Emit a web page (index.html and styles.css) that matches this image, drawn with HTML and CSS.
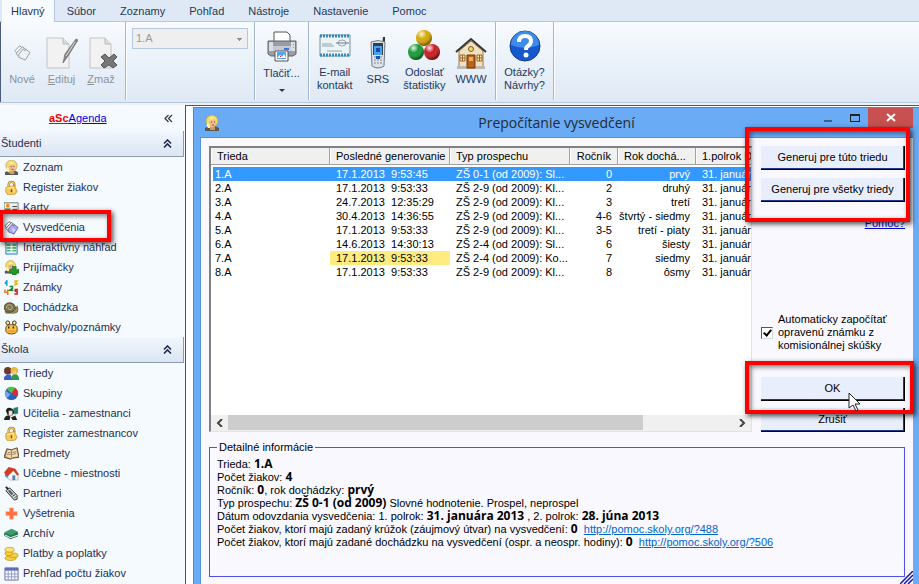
FILE: index.html
```html
<!DOCTYPE html>
<html lang="sk">
<head>
    <meta charset="UTF-8">
    <meta name="viewport" content="width=device-width, initial-scale=1.0">
    <title>aScAgenda - Prepočítanie vysvedčení</title>
    <link rel="stylesheet" href="styles.css">
</head>
<body>
    <!-- Shared icons -->
    <svg class="sprite" aria-hidden="true">
        <symbol id="pupil" viewBox="0 0 16 16">
            <path d="M1 16v-3l4-2h6l4 2v3z" fill="#555a50"/>
            <path d="M6 11h5v4H6z" fill="#d59a68"/>
            <ellipse cx="8" cy="6" rx="6" ry="6" fill="#f3dc6c" stroke="#b59a42" stroke-width=".7"/>
            <path d="M3 8q-1 3 1 5h2V9zM6 3q3-2 5 1-3-1-4 1z" fill="#fff4a5"/>
            <path d="M5 6q3 0 5-2 2 1 2 4t-3 4-4-3z" fill="#f1bd8b"/>
            <path d="M7 7h1M10 7h1" stroke="#36486a"/>
            <path d="M8 10h2" stroke="#a83f32"/>
        </symbol>
        <symbol id="lock" viewBox="0 0 16 16">
            <path d="M5 8V5q0-3 3-3t3 3v2" fill="none" stroke="#b9812a" stroke-width="2.600"/>
            <path d="M5 8V5q0-3 3-3t3 3" fill="none" stroke="#fbe18a"/>
            <path d="M2 8l9-2 3 6-2 3-8 1-2-3z" fill="#f8c957" stroke="#c98f2c" stroke-width=".8"/>
            <path d="M3 9l7-1.500v6" fill="none" stroke="#fff0b0"/>
            <path d="M8 10v3" stroke="#70440c" stroke-width="1.500"/>
        </symbol>
        <symbol id="sheets" viewBox="0 0 18 18">
            <path d="M1 7l5-5 4 3-4 8z" fill="#fff" stroke="#555"/>
            <path d="M2 10l7-7 4 3-6 9z" fill="#eee" stroke="#555"/>
            <path d="M5 11l5-6 1 2 2-1 4 3-5 8-7-3z" fill="currentColor" stroke="#666"/>
            <path d="M9 9l5 3-3 3z" fill="#fff" opacity=".5"/>
        </symbol>
        <symbol id="collapse" viewBox="0 0 9 9">
            <path d="M1 4.500L4.500 1 8 4.500M1 8.500L4.500 5 8 8.500" fill="none" stroke="currentColor" stroke-width="1.600"/>
        </symbol>
    </svg>

    <header class="ribbon">
        <nav class="tabs">
            <button class="tab active">Hlavný</button>
            <button class="tab">Súbor</button>
            <button class="tab">Zoznamy</button>
            <button class="tab">Pohľad</button>
            <button class="tab">Nástroje</button>
            <button class="tab">Nastavenie</button>
            <button class="tab">Pomoc</button>
        </nav>
        <div class="toolbar">
            <div class="group group-edit">
                <button class="tool" disabled>
                    <svg class="sheets-grey" width="32" height="32" viewBox="0 0 32 32"><use href="#sheets" x="8" y="7" width="17" height="17"/></svg>
                    <span>Nové</span>
                </button>
                <button class="tool" disabled>
                    <svg width="32" height="32" viewBox="0 0 32 32">
                        <path d="M1 1h16l6 6v24H1z" fill="#f2f2f2" stroke="#c4c4c4"/>
                        <path d="M17 1v6h6" fill="#ddd" stroke="#bbb"/>
                        <path d="M30 2l2 1-10 16-5 7 2-9z" fill="#888" stroke="#666" stroke-width=".7"/>
                        <path d="M29 5L20 19" stroke="#ddd"/>
                    </svg>
                    <span><u>E</u>dituj</span>
                </button>
                <button class="tool" disabled>
                    <svg width="32" height="32" viewBox="0 0 32 32">
                        <path d="M5 1h15l6 6v24H5z" fill="#f2f2f2" stroke="#c4c4c4"/>
                        <path d="M20 1v6h6" fill="#ddd" stroke="#bbb"/>
                        <path d="M16 20l4-3 4 4 5-4 3 3-4 4 4 4-4 3-4-3-5 3-3-3 4-4z" fill="#777" stroke="#555"/>
                    </svg>
                    <span><u>Z</u>maž</span>
                </button>
            </div>
            <div class="group group-class">
                <select class="class-select" aria-label="Trieda" disabled><option>1.A</option></select>
            </div>
            <div class="group group-print">
                <button class="tool">
                    <svg width="32" height="32" viewBox="0 0 32 32">
                        <path d="M8 12V1h13l3 3v8z" fill="#fff" stroke="#555"/>
                        <path d="M2 10h28v13l-3 2H5l-3-2z" fill="#9b9da5" stroke="#60626b"/>
                        <path d="M3 11h4v9H3zM25 11h4v9h-4z" fill="#dcdee2"/>
                        <path d="M7 15h18v5H7z" fill="#c5c9d1"/>
                        <path d="M18 17h5v2h-5z" fill="#3978e8"/>
                        <path d="M27 13h1v1h-1zM27 16h1v1h-1z" fill="#bc982d"/>
                        <path d="M9 20h13v10H9z" fill="#fff" stroke="#555"/>
                        <path d="M11 21h9v7h-9z" fill="#58a4ed"/>
                        <path d="M11 27l3-3 2 2 2-3 2 4z" fill="#fff"/>
                        <path d="M14 25h1v1h-1z" fill="#e33"/>
                    </svg>
                    <span>Tlačiť...</span>
                    <span class="arrow"></span>
                </button>
            </div>
            <div class="group group-online">
                <button class="tool">
                    <svg width="32" height="32" viewBox="0 0 32 32">
                        <path d="M1 5h30v21H1z" fill="#edf4f8" stroke="#78909c"/>
                        <path d="M1 6h30M1 25h30" stroke="#378cc0" stroke-width="3" stroke-dasharray="2 1"/>
                        <path d="M3 14h10M3 16h12M8 21h15" stroke="#8fa3ad"/>
                        <ellipse cx="23" cy="13" rx="4" ry="3" fill="none" stroke="#98a6ac"/>
                        <path d="M17 13h13" stroke="#607d8b"/>
                    </svg>
                    <span>E-mail<br>kontakt</span>
                </button>
                <button class="tool">
                    <svg width="32" height="32" viewBox="0 0 32 32">
                        <path d="M21 0h2v10h-3z" fill="#333"/>
                        <path d="M9 5q7-3 14 0l-1 24q-6 4-12 0z" fill="#dce2e8" stroke="#737b85"/>
                        <path d="M11 6h10v12H11z" fill="#353e4d"/>
                        <path d="M12 9h8v9h-8z" fill="#47a4f2"/>
                        <path d="M14 11h4v4h-4z" fill="#174caa"/>
                        <path d="M12 20h8M12 23h8M12 26h8" stroke="#838991" stroke-dasharray="2 1"/>
                        <path d="M14 19h4v3h-4z" fill="#1855b9"/>
                    </svg>
                    <span>SRS</span>
                </button>
                <button class="tool">
                    <svg width="32" height="32" viewBox="0 0 32 32">
                        <defs>
                            <radialGradient id="shine" cx=".35" cy=".25" r=".7"><stop stop-color="#fff" stop-opacity=".9"/><stop offset=".45" stop-color="#fff" stop-opacity="0"/><stop offset="1" stop-opacity=".4"/></radialGradient>
                        </defs>
                        <g fill="#d8a900"><circle cx="16" cy="8" r="8"/><circle cx="8" cy="22" r="8" fill="#169a32"/><circle cx="24" cy="22" r="8" fill="#c9191e"/></g>
                        <g fill="url(#shine)"><circle cx="16" cy="8" r="8"/><circle cx="8" cy="22" r="8"/><circle cx="24" cy="22" r="8"/></g>
                    </svg>
                    <span>Odoslať<br>štatistiky</span>
                </button>
                <button class="tool">
                    <svg width="32" height="32" viewBox="0 0 32 32">
                        <path d="M4 14L16 4l12 10v17H4z" fill="#f0e2c0" stroke="#987b4d"/>
                        <path d="M1 15L16 2l15 13" fill="none" stroke="#3d3430" stroke-width="2"/>
                        <path d="M12 18h8v13h-8z" fill="#b96220" stroke="#70350c"/>
                        <path d="M14 20h4v4h-4z" fill="#e7b160"/>
                        <circle cx="16" cy="12" r="2.500" fill="#f9d967" stroke="#76582f"/>
                        <path d="M5 18h5v6H5zM22 18h5v6h-5z" fill="#ffe99a" stroke="#9a602d"/>
                        <path d="M5 21h5M7.500 18v6M22 21h5M24.500 18v6" stroke="#9a602d"/>
                        <path d="M2 29h9v3H2zM21 29h9v3h-9z" fill="#bdb9b2"/>
                    </svg>
                    <span>WWW</span>
                </button>
            </div>
            <div class="group group-help">
                <button class="tool">
                    <svg width="32" height="32" viewBox="0 0 32 32">
                        <circle cx="16" cy="16" r="15" fill="#1758cc" stroke="#123c86"/>
                        <path d="M2 15A14 14 0 0 1 30 15Q16 21 2 15" fill="#4c9cf5" opacity=".75"/>
                        <path d="M10 12q0-6 6-6t6 5q0 3-3 5-2 1-2 4" fill="none" stroke="#fff" stroke-width="4"/>
                        <circle cx="17" cy="25" r="2.500" fill="#fff"/>
                    </svg>
                    <span>Otázky?<br>Návrhy?</span>
                </button>
            </div>
        </div>
    </header>

    <div class="workspace">
        <aside class="sidebar">
            <div class="brand">
                <a href="#"><b>aSc</b>Agenda</a>
                <svg class="brand-close" width="9" height="9" viewBox="0 0 9 9"><path d="M4.500 1L1 4.500 4.500 8M8 1L4.500 4.500 8 8" fill="none" stroke="#334" stroke-width="1.200"/></svg>
            </div>

            <h2 class="section-title">Študenti <svg width="9" height="9"><use href="#collapse"/></svg></h2>
            <ul class="menu">
                <li><a href="#"><svg><use href="#pupil"/></svg>Zoznam</a></li>
                <li><a href="#"><svg><use href="#lock"/></svg>Register žiakov</a></li>
                <li><a href="#"><svg viewBox="0 0 16 16">
                    <path d="M0 3h15v11H0z" fill="#f2f5f2" stroke="#68786b"/>
                    <circle cx="4" cy="6" r="2" fill="#ee8c24"/><path d="M1 13V9h6v4z" fill="#329846"/>
                    <path d="M9 7h5M9 10h5" stroke="#333"/>
                </svg>Karty</a></li>
                <li class="highlighted"><a href="#"><svg class="sheets-violet"><use href="#sheets"/></svg>Vysvedčenia</a></li>
                <li><a href="#"><svg viewBox="0 0 16 16">
                    <path d="M2 1h12v14H2z" fill="#dcecf7" stroke="#237bb3"/><path d="M3 4h4v8H3zM9 4h4v8H9z" fill="#4caf69"/>
                    <path d="M3 7h10M3 10h10" stroke="#fff"/>
                </svg>Interaktívny náhľad</a></li>
                <li><a href="#"><svg viewBox="0 0 16 16"><use href="#pupil" width="14" height="15"/>
                    <path d="M9 7h4v3h3v4h-3v2H9v-2H6v-4h3z" fill="#26962c" stroke="#11651c" stroke-width=".6"/>
                </svg>Prijímačky</a></li>
                <li><a href="#"><svg viewBox="0 0 16 16" fill="none" stroke-width="1.600">
                    <path d="M1 4l2-3v5" stroke="#0aa6c9"/><path d="M11 1h3l-2 2 2 1-3 2" stroke="#e0b80c"/>
                    <path d="M6 7h3v2l-3 2h4" stroke="#168522"/><path d="M1 10v3h3M4 10v6" stroke="#ee7415"/>
                    <path d="M15 10h-3v2h2v3h-3" stroke="#df171c"/>
                </svg>Známky</a></li>
                <li><a href="#"><svg viewBox="0 0 16 16">
                    <path d="M1 12q7 2 11-1V8q3-1 3 2 0 4-4 4H2z" fill="#96955d" stroke="#5c5a3a" stroke-width=".7"/>
                    <ellipse cx="6" cy="8" rx="6" ry="5" fill="#7c714c" stroke="#4e4732"/>
                    <path d="M3 9q-1-4 3-4 4 1 2 5-4 1-3-2" fill="none" stroke="#c6bb8b"/><path d="M14 9V6" stroke="#5c5a3a"/>
                </svg>Dochádzka</a></li>
                <li><a href="#"><svg viewBox="0 0 16 16">
                    <circle cx="4" cy="3" r="2" fill="#ffe699" stroke="#333"/><circle cx="11" cy="3" r="2" fill="#ffe699" stroke="#333"/>
                    <path d="M2 8q0-3 6-3t6 3v4q-1 3-6 3t-6-3z" fill="#f9c243" stroke="#6c4414"/>
                    <path d="M5 7v2M10 7v2" stroke="#222" stroke-width="1.500"/><path d="M4 11h8v2H4z" fill="#ef9b30"/>
                </svg>Pochvaly/poznámky</a></li>
            </ul>

            <h2 class="section-title">Škola <svg width="9" height="9"><use href="#collapse"/></svg></h2>
            <ul class="menu">
                <li><a href="#"><svg viewBox="0 0 16 16">
                    <circle cx="4" cy="5" r="4" fill="#6d3b24"/><path d="M0 15v-3l3-3h4l2 6z" fill="#3760c8"/>
                    <circle cx="11" cy="5" r="4" fill="#e5b83b"/><path d="M9 5h4v4H9z" fill="#f8c68c"/><path d="M8 15v-4l2-2h4l2 3v3z" fill="#2e9a4a"/>
                </svg>Triedy</a></li>
                <li><a href="#"><svg viewBox="0 0 16 16">
                    <circle cx="8" cy="8" r="7" fill="#2a62b8"/><path d="M8 8L3 3q4-4 9-1z" fill="#4bc24e"/>
                    <path d="M8 8l4-6q5 4 2 9z" fill="#e32929"/><path d="M2 5l5 4-4 4q-3-4-1-8" fill="#75a9e5"/>
                </svg>Skupiny</a></li>
                <li><a href="#"><svg viewBox="0 0 16 16">
                    <path d="M2 5q1-4 5-3t4 5l-2 3H4z" fill="#1c1c1c"/><path d="M5 5h4v5H5z" fill="#eee0cf"/>
                    <path d="M0 15q0-5 5-5l3 2 4-2 2 5z" fill="#202226"/><path d="M10 2l5-1v7l-4 1z" fill="#23816d"/><path d="M7 11l2 4H6z" fill="#fff"/>
                </svg>Učitelia - zamestnanci</a></li>
                <li><a href="#"><svg><use href="#lock"/></svg>Register zamestnancov</a></li>
                <li><a href="#"><svg viewBox="0 0 16 16">
                    <path d="M0 12L3 3l5 1 6-2 2 10-7 1-2 1z" fill="#b89964" stroke="#60452a"/>
                    <path d="M2 11l2-7 4 1 5-2 2 8-6 1-2 1z" fill="#f3dcae"/><path d="M8 5v7M4 7h3M3 9h4M9 7l4-1M9 9l4-1" stroke="#80664a" stroke-width=".8"/>
                </svg>Predmety</a></li>
                <li><a href="#"><svg viewBox="0 0 16 16">
                    <path d="M1 7l4-5 6 5v8l-7-2-3-2z" fill="#4c88cb"/><path d="M4 9l6-5 5 5v6H6l-2-2z" fill="#f3f3f3" stroke="#9098a0" stroke-width=".6"/>
                    <path d="M0 7l5-6 7 2 4 6-2 1-4-5-6 6z" fill="#ce3e29"/><path d="M9 10h3v5H9z" fill="#557fb8"/>
                </svg>Učebne - miestnosti</a></li>
                <li><a href="#"><svg viewBox="0 0 16 16">
                    <path d="M2 1l11 11" stroke="#222" stroke-width="2"/><path d="M2 5l4-3 8 8v4l-3 1z" fill="#ddd" stroke="#222"/>
                    <path d="M4 5l2-1 4 4-2 2z" fill="#566"/><path d="M9 11l3-2M11 13l2-2" stroke="#222"/>
                </svg>Partneri</a></li>
                <li><a href="#"><svg viewBox="0 0 16 16"><path d="M6 2h4v4h4v4h-4v4H6v-4H2V6h4z" fill="#ff7040" stroke="#ff9a70" stroke-width=".5"/></svg>Vyšetrenia</a></li>
                <li><a href="#"><svg viewBox="0 0 16 16">
                    <path d="M0 8l8-4 7 3v4l-8 3-7-4z" fill="#267351"/><path d="M1 9l6 3 8-3v1l-8 3-6-3z" fill="#fff"/>
                    <path d="M0 7l8-4 7 3-8 4z" fill="#3a9b6b"/>
                </svg>Archív</a></li>
                <li><a href="#"><svg viewBox="0 0 16 16" fill="#f6cf36" stroke="#c4931c" stroke-width=".8">
                    <ellipse cx="7" cy="13" rx="6" ry="2.500"/><ellipse cx="10" cy="10" rx="5" ry="2.500"/><ellipse cx="5" cy="8" rx="4" ry="2.500"/><ellipse cx="6" cy="4" rx="5" ry="2.500" fill="#ffe569"/>
                </svg>Platby a poplatky</a></li>
                <li><a href="#"><svg viewBox="0 0 16 16">
                    <path d="M1 2h14v13H1z" fill="#f7f8ff" stroke="#686f9b"/><path d="M1 2h14v3H1z" fill="#606db5"/>
                    <path d="M1 8.500h14M1 11.500h14M4.500 5v10M8 5v10M11.500 5v10" stroke="#949bc2"/>
                </svg>Prehľad počtu žiakov</a></li>
            </ul>
        </aside>

        <main class="desktop">
            <section class="dialog">
                <div class="titlebar">
                    <svg class="dialog-icon" width="16" height="16"><use href="#pupil"/></svg>
                    <h1>Prepočítanie vysvedčení</h1>
                    <div class="window-controls">
                        <button class="minimize" aria-label="Minimalizovať"></button>
                        <button class="maximize" aria-label="Maximalizovať"></button>
                        <button class="close" aria-label="Zavrieť"><svg width="10" height="9" viewBox="0 0 10 9"><path d="M1 1l8 7M9 1L1 8" stroke="#fff" stroke-width="2"/></svg></button>
                    </div>
                </div>

                <div class="client">
                    <div class="upper">
                        <div class="list">
                            <div class="list-rows">
                                <table>
                                    <colgroup><col class="c-class"><col class="c-date"><col class="c-type"><col class="c-grade"><col class="c-year"><col class="c-term"></colgroup>
                                    <thead>
                                        <tr><th>Trieda</th><th>Posledné generovanie</th><th>Typ prospechu</th><th>Ročník</th><th>Rok dochá...</th><th>1.polrok Dátum</th></tr>
                                    </thead>
                                    <tbody>
                                        <tr class="selected"><td>1.A</td><td>17.1.2013&nbsp; 9:53:45</td><td>ZŠ 0-1 (od 2009): Sl...</td><td>0</td><td>prvý</td><td>31. januára 2013</td></tr>
                                        <tr><td>2.A</td><td>17.1.2013&nbsp; 9:53:33</td><td>ZŠ 2-9 (od 2009): Kl...</td><td>2</td><td>druhý</td><td>31. januára 2013</td></tr>
                                        <tr><td>3.A</td><td>24.7.2013&nbsp; 12:35:29</td><td>ZŠ 2-9 (od 2009): Kl...</td><td>3</td><td>tretí</td><td>31. januára 2013</td></tr>
                                        <tr><td>4.A</td><td>30.4.2013&nbsp; 14:36:55</td><td>ZŠ 2-9 (od 2009): Kl...</td><td>4-6</td><td>štvrtý - siedmy</td><td>31. januára 2013</td></tr>
                                        <tr><td>5.A</td><td>17.1.2013&nbsp; 9:53:33</td><td>ZŠ 2-9 (od 2009): Kl...</td><td>3-5</td><td>tretí - piaty</td><td>31. januára 2013</td></tr>
                                        <tr><td>6.A</td><td>14.6.2013&nbsp; 14:30:13</td><td>ZŠ 2-4 (od 2009): Sl...</td><td>6</td><td>šiesty</td><td>31. januára 2013</td></tr>
                                        <tr><td>7.A</td><td class="stale">17.1.2013&nbsp; 9:53:33</td><td>ZŠ 2-4 (od 2009): Ko...</td><td>7</td><td>siedmy</td><td>31. januára 2013</td></tr>
                                        <tr><td>8.A</td><td>17.1.2013&nbsp; 9:53:33</td><td>ZŠ 2-9 (od 2009): Kl...</td><td>8</td><td>ôsmy</td><td>31. januára 2013</td></tr>
                                    </tbody>
                                </table>
                            </div>
                            <div class="scrollbar">
                                <button aria-label="Doľava"><svg width="7" height="8" viewBox="0 0 7 8"><path d="M6 0L2 4l4 4" fill="none" stroke="#444" stroke-width="2"/></svg></button>
                                <div class="track"><div class="thumb"></div></div>
                                <button aria-label="Doprava"><svg width="7" height="8" viewBox="0 0 7 8"><path d="M1 0l4 4-4 4" fill="none" stroke="#444" stroke-width="2"/></svg></button>
                            </div>
                        </div>

                        <div class="actions">
                            <div class="generate">
                                <button class="btn">Generuj pre túto triedu</button>
                                <button class="btn">Generuj pre všetky triedy</button>
                            </div>
                            <a class="help-link" href="#">Pomoc?</a>
                            <label class="auto-count">
                                <input type="checkbox" checked>
                                <span>Automaticky započítať opravenú známku z komisionálnej skúšky</span>
                            </label>
                            <div class="confirm">
                                <button class="btn">OK</button>
                                <svg class="cursor" width="13" height="20" viewBox="0 0 13 20"><path d="M1 1v15l4-3 3 6 2-1-3-6h5z" fill="#fff" stroke="#222"/></svg>
                            </div>
                            <button class="btn">Zrušiť</button>
                        </div>
                    </div>

                    <fieldset class="details">
                        <legend>Detailné informácie</legend>
                        <p>Trieda: <b>1.A</b></p>
                        <p>Počet žiakov: <b>4</b></p>
                        <p>Ročník: <b>0</b>, rok dochádzky: <b>prvý</b></p>
                        <p>Typ prospechu: <b>ZŠ 0-1 (od 2009)</b> Slovné hodnotenie. Prospel, neprospel</p>
                        <p>Dátum odovzdania vysvedčenia: 1. polrok: <b>31. januára 2013</b> , 2. polrok: <b>28. júna 2013</b></p>
                        <p>Počet žiakov, ktorí majú zadaný krúžok (záujmový útvar) na vysvedčení: <b>0</b>&nbsp; <a href="#">http://pomoc.skoly.org/?488</a></p>
                        <p>Počet žiakov, ktorí majú zadané dochádzku na vysvedčení (ospr. a neospr. hodiny): <b>0</b>&nbsp; <a href="#">http://pomoc.skoly.org/?506</a></p>
                    </fieldset>
                    <svg class="grip" width="13" height="13" viewBox="0 0 13 13"><path d="M0 13L13 0M4 13l9-9M8 13l5-5" stroke="#1616a0" stroke-width="1.500"/></svg>
                </div>
            </section>
        </main>
    </div>
</body>
</html>
```
FILE: styles.css
```css
:root {
    --ribbon-text: #1e395b;
    --line: #b4c8e0;
    --window-blue: #6aabf6;
    --client: #f9f8ff;
    --red: #fe0000;
}

*,
*::before,
*::after {
    margin: 0;
    padding: 0;
    box-sizing: border-box;
}

body {
    display: flex;
    flex-direction: column;
    height: 100vh;
    overflow: hidden;
    background: #f0f0f0;
    color: #000;
    font-family: "Liberation Sans", Arial, sans-serif;
    font-size: 11px;
    line-height: 13px;
}

button,
select,
input {
    font: inherit;
    color: inherit;
}

button {
    border: none;
    background: none;
}

.sprite {
    position: absolute;
    width: 0;
    height: 0;
}

/* Ribbon */
.ribbon {
    color: var(--ribbon-text);
    background: #dfe9f5;
    border-bottom: 1px solid var(--line);
}

.tabs {
    display: flex;
    height: 22px;
    padding-left: 2px;
    border-bottom: 1px solid var(--line);
}

.tab {
    height: 22px;
    padding: 0 12px;
}

.tab.active {
    padding: 0 9px;
    background: #f8fbfe;
    border-right: 1px solid var(--line);
}

.toolbar {
    display: flex;
    height: 80px;
    border-left: 1px solid #4a5c7c;
    background: linear-gradient(#f8fbfe, #eaf1f9 50%, #dfe9f5);
}

.group {
    display: flex;
    justify-content: center;
    margin-bottom: 2px;
    border-right: 1px solid #9fb6d4;
    box-shadow: 1px 0 #fff;
}

.group-edit {
    width: 125px;
    justify-content: space-between;
    padding: 0 8px 0 5px;
}

.group-class {
    width: 129px;
    padding-top: 6px;
}

.group-print {
    width: 54px;
}

.group-online {
    width: 187px;
    justify-content: space-between;
    padding: 0 8px;
}

.group-help {
    width: 58px;
}

.tool {
    display: flex;
    flex-direction: column;
    align-items: center;
    justify-content: center;
    gap: 4px;
    min-width: 32px;
    text-align: center;
}

.tool:disabled {
    color: #8c939c;
}

.sheets-grey {
    color: #eee;
    opacity: .6;
}

.arrow {
    margin-top: 5px;
    border: 3px solid transparent;
    border-top-color: var(--ribbon-text);
    border-bottom: none;
}

.class-select {
    width: 116px;
    height: 21px;
    padding: 0 3px;
    border: 1px solid var(--line);
    color: #979ba0;
    appearance: none;
    opacity: 1;
    background: linear-gradient(#8a8f96, #8a8f96) right 5px top 9px / 5px 1px no-repeat,
        linear-gradient(#8a8f96, #8a8f96) right 6px top 10px / 3px 1px no-repeat,
        linear-gradient(#8a8f96, #8a8f96) right 7px top 11px / 1px 1px no-repeat,
        #efefef;
}

/* Sidebar */
.workspace {
    display: flex;
    flex: 1;
    min-height: 0;
    margin-top: 2px;
}

.sidebar {
    width: 185px;
    flex: none;
    background: #f5faff;
    color: #1f2f50;
}

.brand {
    display: flex;
    align-items: center;
    height: 26px;
    padding-left: 49px;
}

.brand a {
    color: #0000e0;
}

.brand b {
    color: #f00000;
    text-decoration: underline;
}

.brand-close {
    margin-left: auto;
    margin-right: 12px;
}

.section-title {
    display: flex;
    justify-content: space-between;
    align-items: center;
    height: 26px;
    margin-right: 1px;
    padding: 0 11px 0 1px;
    font-size: 11px;
    font-weight: normal;
    background: linear-gradient(#f2f7fd, #dae5f3);
    border-right: 1px solid #8c9bb0;
    border-bottom: 1px solid #8c9bb0;
}

.menu {
    list-style: none;
}

.menu a {
    display: flex;
    align-items: center;
    gap: 4px;
    height: 20px;
    padding-left: 4px;
    color: inherit;
    text-decoration: none;
}

.menu svg {
    width: 15px;
    height: 15px;
}

.sheets-violet {
    color: #a9a5ff;
}

.highlighted,
.generate,
.confirm {
    position: relative;
}

.highlighted::after,
.generate::after,
.confirm::after {
    content: "";
    position: absolute;
    z-index: 1;
    border: 4px solid var(--red);
    box-shadow: 2px 2px 5px rgba(0, 0, 0, .7), inset 2px 2px 5px rgba(0, 0, 0, .5);
    pointer-events: none;
}

.highlighted::after {
    top: -7px;
    bottom: -5px;
    left: -1px;
    width: 112px;
}

/* Dialog */
.desktop {
    display: flex;
    flex: 1;
    min-width: 0;
    padding: 1px 0 0 7px;
    background: #fff;
    border-top: 1px solid #555;
    border-left: 1px solid #555;
}

.dialog {
    display: flex;
    flex-direction: column;
    flex: 1;
    min-width: 0;
    padding: 0 6px;
    background: var(--window-blue);
    border: 1px solid #4c86c6;
    border-width: 1px 0 0 1px;
}

.titlebar {
    display: grid;
    grid-template-columns: 1fr auto 1fr;
    height: 29px;
    align-items: center;
}

.dialog-icon {
    margin-left: 4px;
}

.titlebar h1 {
    font: 14px "Open Sans", "Noto Sans", sans-serif;
    color: #23292f;
}

.window-controls {
    display: flex;
    align-self: start;
    justify-content: flex-end;
    align-items: center;
    gap: 18px;
}

.minimize {
    width: 8px;
    height: 2px;
    margin-top: 6px;
    background: #3c5f88;
}

.maximize {
    width: 10px;
    height: 8px;
    border: 1px solid #222;
    border-top-width: 2px;
}

.close {
    width: 45px;
    height: 20px;
    margin-left: -10px;
    background: #c75050;
}

.client {
    position: relative;
    display: flex;
    flex-direction: column;
    flex: 1;
    min-height: 0;
    gap: 9px;
    padding: 8px 8px 7px;
    background: var(--client);
    border: 1px solid #5590d2;
    border-width: 1px 0 0 1px;
}

.upper {
    display: flex;
    flex: 1;
    gap: 9px;
    min-height: 0;
}

.list {
    display: flex;
    flex-direction: column;
    flex: 1;
    min-width: 0;
    background: #fff;
    border: 1px solid #e3e3e3;
    border-top: 2px solid #808080;
    border-left: 2px solid #808080;
}

.list-rows {
    flex: 1;
    overflow: hidden;
}

table {
    width: 605px;
    table-layout: fixed;
    border-spacing: 0;
    white-space: nowrap;
}

.c-class {
    width: 119px;
}

.c-date,
.c-type {
    width: 120px;
}

.c-grade {
    width: 48px;
}

.c-year {
    width: 78px;
}

.c-term {
    width: 120px;
}

th {
    height: 17px;
    padding: 0 6px;
    font-weight: normal;
    text-align: left;
    background: #f0f0f0;
    border-right: 1px solid #a0a0a0;
    border-bottom: 1px solid #a0a0a0;
    box-shadow: inset 1px 0 #fff;
}

tbody::before {
    content: "";
    display: block;
    height: 2px;
}

td {
    height: 14px;
    padding: 0 6px;
}

td:first-child {
    padding-left: 2px;
    border-left: 2px solid #fff;
}

th:nth-child(4),
td:nth-child(4),
td:nth-child(5) {
    text-align: right;
}

td:nth-child(5) {
    padding-left: 0;
}

.selected td {
    color: #fff;
    background: #3399ff;
}

.stale {
    background: #ffec80;
}

.scrollbar {
    display: flex;
    height: 16px;
    background: #f0f0f0;
}

.scrollbar button {
    width: 17px;
}

.track {
    flex: 1;
}

.thumb {
    width: 82%;
    height: 15px;
    background: #cdcdcd;
}

.actions {
    display: flex;
    flex-direction: column;
    width: 144px;
}

.btn {
    width: 100%;
    height: 24px;
    background: #e8eefc;
    border-right: 1px solid #000;
    border-bottom: 1px solid #000;
    box-shadow: inset -1px -1px #1c3a8c;
}

.generate .btn + .btn {
    margin-top: 8px;
}

.generate::after {
    inset: -19px -5px -20px -16px;
}

.help-link {
    align-self: flex-end;
    margin-top: 15px;
    color: #0000e0;
}

.auto-count {
    display: flex;
    align-items: center;
    gap: 5px;
    margin: auto 0 25px;
}

.auto-count input {
    flex: none;
    width: 12px;
    height: 12px;
    appearance: none;
    border: 1px solid #d8d8d8;
    border-top-color: #555;
    border-left-color: #555;
    background: #fff;
}

.auto-count input:checked::before {
    content: "";
    display: block;
    width: 5px;
    height: 8px;
    margin-left: 3px;
    border: solid #000;
    border-width: 0 2px 2px 0;
    transform: rotate(40deg);
}

.confirm {
    margin-bottom: 7px;
}

.confirm::after {
    inset: -16px -9px -13px -16px;
}

.cursor {
    position: absolute;
    z-index: 2;
    top: 15px;
    left: 87px;
}

.details {
    min-height: 136px;
    padding: 4px 7px;
    border: 1px solid #5050f0;
}

.details legend {
    padding: 0 2px;
}

.details b {
    font-family: "Open Sans", "Noto Sans", sans-serif;
    font-size: 12px;
    line-height: 1px;
}

.details a {
    color: #0066cc;
}

.grip {
    position: absolute;
    right: 0;
    bottom: 0;
}
```
